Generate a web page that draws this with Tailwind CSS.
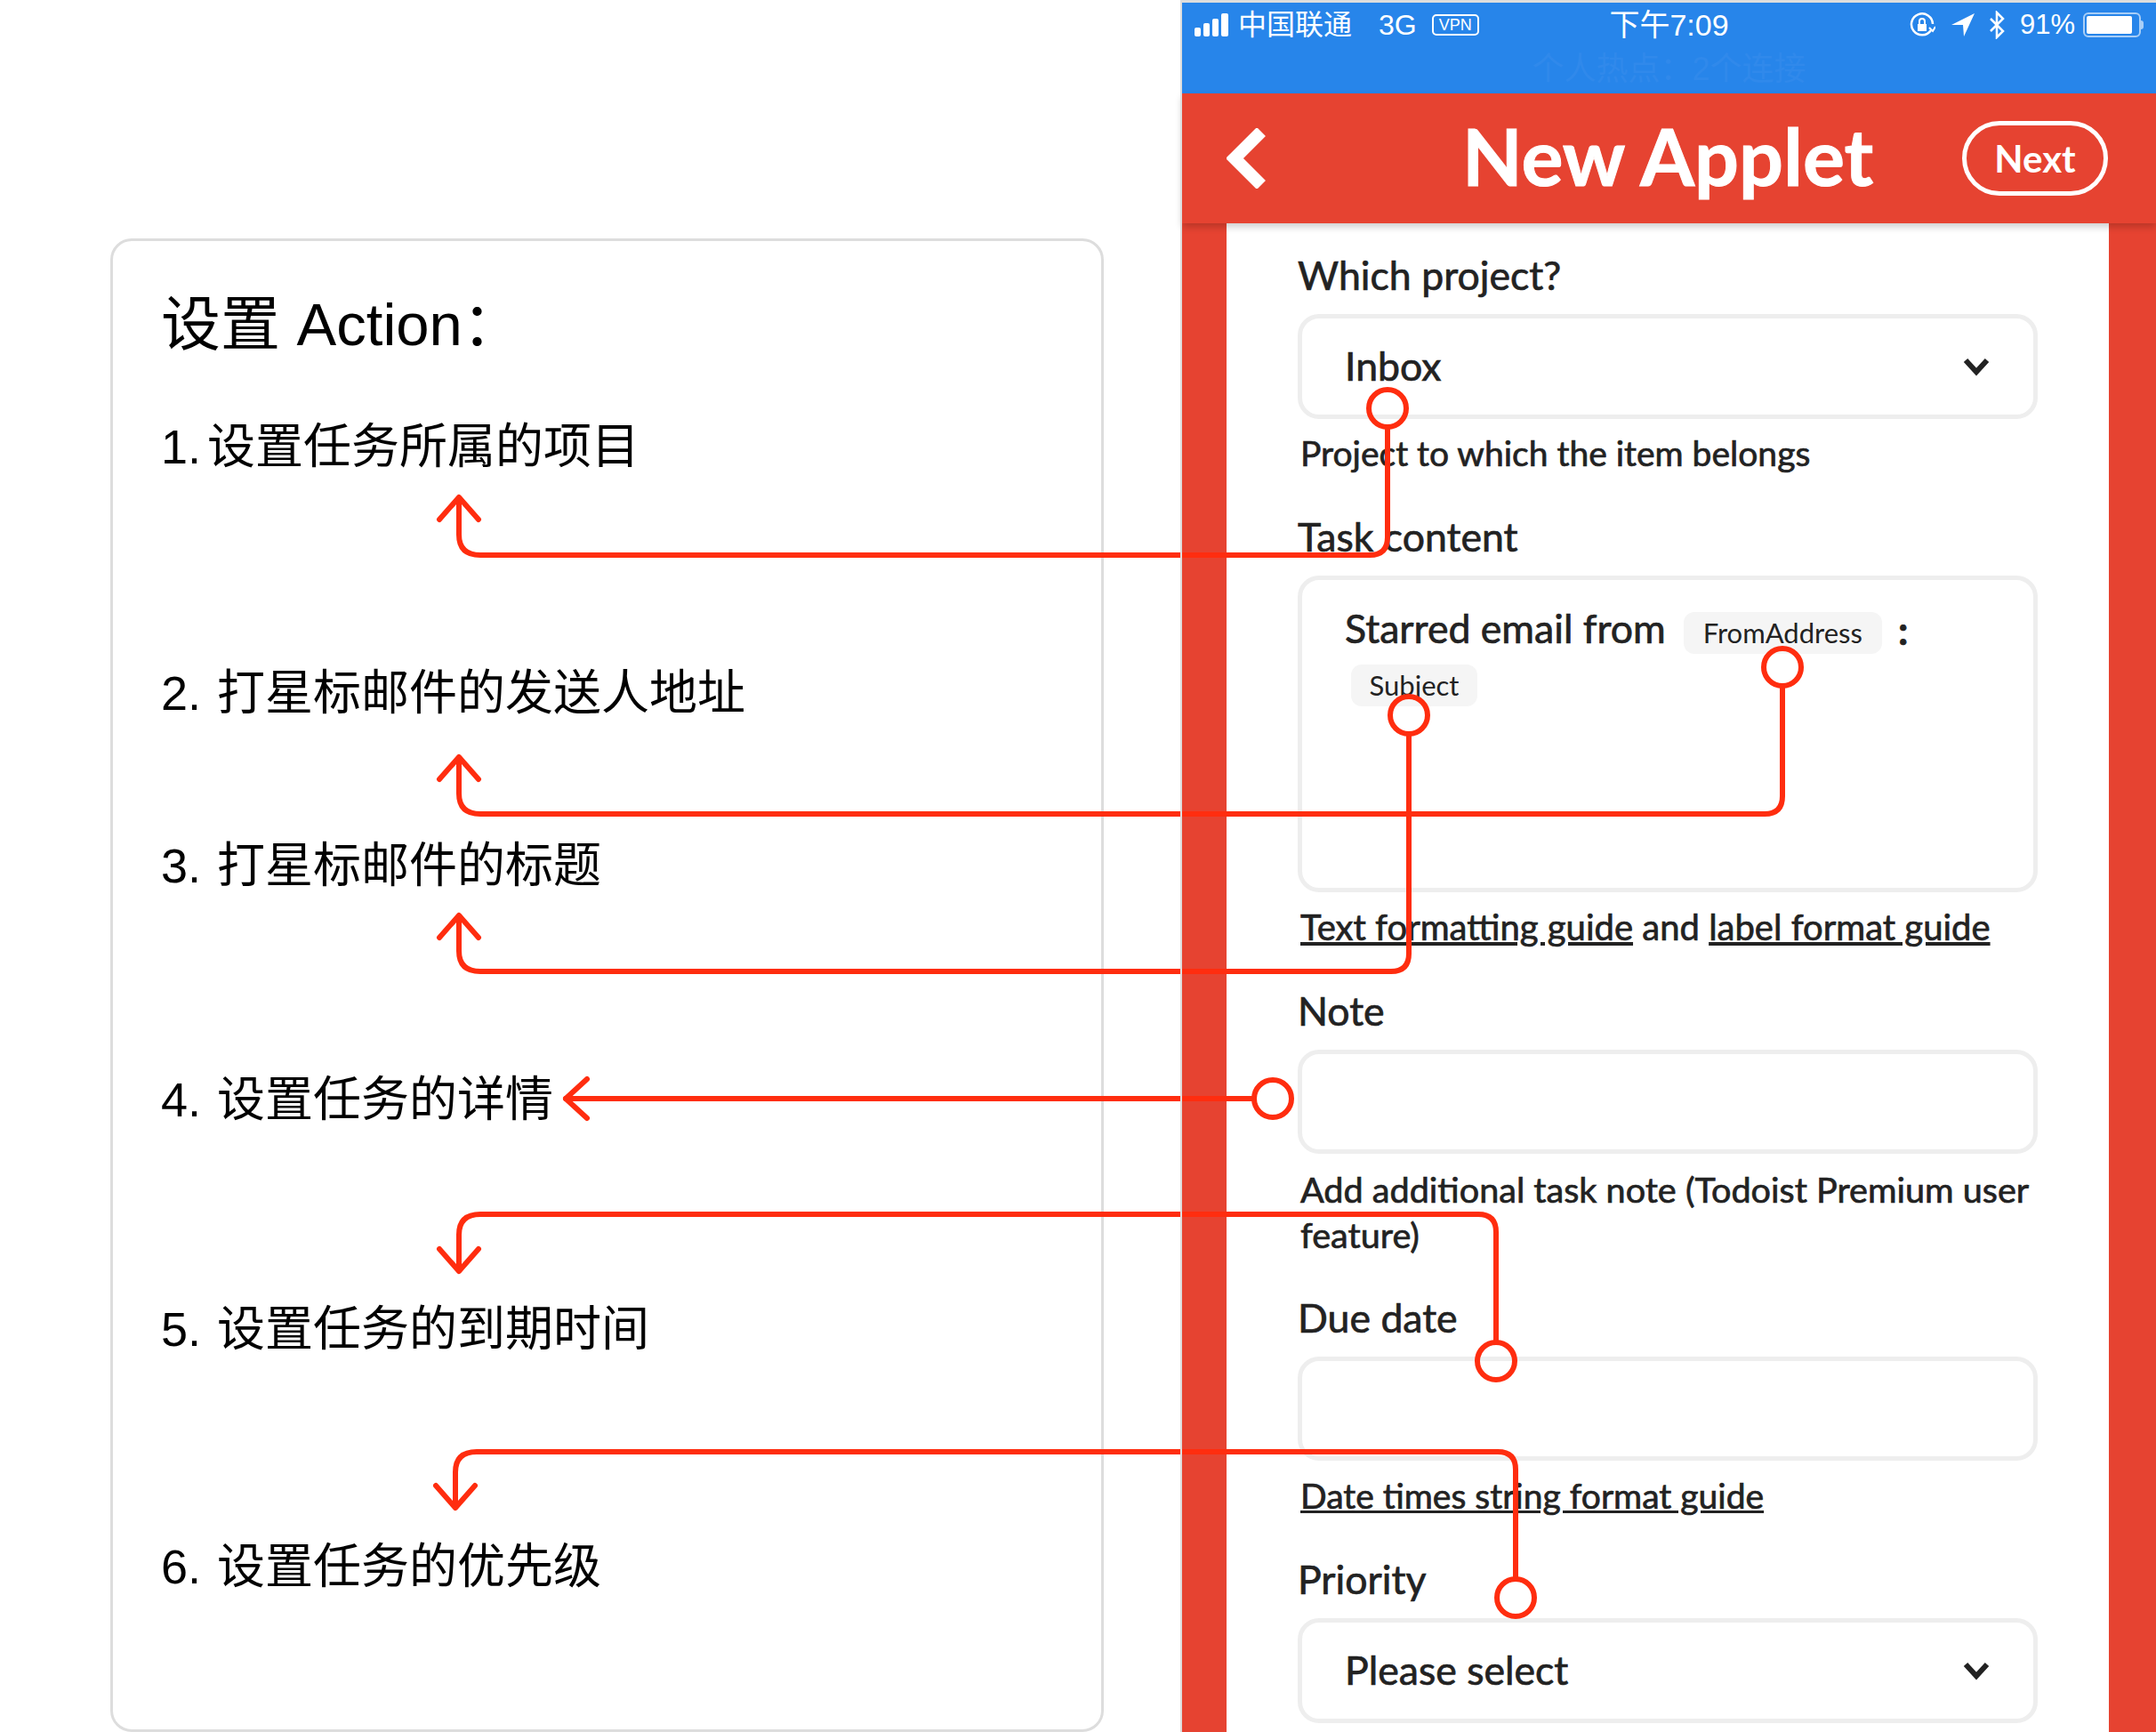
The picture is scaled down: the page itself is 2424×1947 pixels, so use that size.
<!DOCTYPE html>
<html lang="zh-CN">
<head>
    <meta charset="UTF-8">
    <title>设置 Action</title>
    <script src="https://cdn.jsdelivr.net/npm/@tailwindcss/browser@4"></script>
</head>
<body class="bg-white">
    <div class="relative flex w-[2424px] h-[1947px] overflow-hidden bg-white">

        <!-- Left: step list -->
        <div class="w-[1327px] shrink-0 pt-[268px] pl-[124px]">
            <div class="w-[1117px] h-[1679px] border-[3px] border-[#dddddd] rounded-[24px] pl-[54px] pt-[54px] text-black font-['Liberation_Sans','Noto_Sans_CJK_SC',sans-serif]">
                <h1 class="h-[80px] leading-[80px] text-[67px] font-normal">设置 Action：</h1>
                <p class="mt-[67px] h-[60px] leading-[60px] text-[54px]">1.<span class="ml-[7px]">设置任务所属的项目</span></p>
                <p class="mt-[217px] h-[60px] leading-[60px] text-[54px]">2.<span class="ml-[18px]">打星标邮件的发送人地址</span></p>
                <p class="mt-[134px] h-[60px] leading-[60px] text-[54px]">3.<span class="ml-[18px]">打星标邮件的标题</span></p>
                <p class="mt-[203px] h-[60px] leading-[60px] text-[54px]">4.<span class="ml-[18px]">设置任务的详情</span></p>
                <p class="mt-[198px] h-[60px] leading-[60px] text-[54px]">5.<span class="ml-[18px]">设置任务的到期时间</span></p>
                <p class="mt-[207px] h-[60px] leading-[60px] text-[54px]">6.<span class="ml-[18px]">设置任务的优先级</span></p>
            </div>
        </div>

        <!-- Right: phone -->
        <div class="w-[1097px] shrink-0 flex flex-col border-t-[3px] border-[#dddddd] pl-[2px] font-['Lato','Noto_Sans_CJK_SC',sans-serif]">
            <!-- Status bar -->
            <div class="h-[102px] bg-[#2785ea] text-white relative font-['Liberation_Sans','Noto_Sans_CJK_SC',sans-serif]">
                <div class="flex items-center justify-between h-[50px] pl-[14px] pr-[14px]">
                    <div class="flex items-center w-[340px]">
                        <svg width="40" height="26" viewBox="0 0 40 26" fill="#fff"><rect x="0" y="16" width="7" height="10" rx="2"/><rect x="10" y="11" width="7" height="15" rx="2"/><rect x="20" y="6" width="7" height="20" rx="2"/><rect x="30" y="0" width="8" height="26" rx="2"/></svg>
                        <span class="ml-[9px] text-[32px]">中国联通</span>
                        <span class="ml-[30px] text-[32px]">3G</span>
                        <span class="ml-[17px] w-[53px] h-[24px] border-2 border-white rounded-[5px] flex items-center justify-center text-[18px] leading-none">VPN</span>
                    </div>
                    <span class="text-[34px] font-normal">下午7:09</span>
                    <div class="flex items-center w-[340px] justify-end">
                        <svg width="30" height="30" viewBox="0 0 30 30" fill="none" stroke="#fff" stroke-width="2.5"><path d="M25 21 A12 12 0 1 1 27 14"/><path d="M23 18l4 4 3-5" stroke-width="2"/><rect x="10" y="14" width="10" height="8" fill="#fff" stroke="none"/><path d="M12 14v-3a3 3 0 0 1 6 0v3" stroke-width="2"/></svg>
                        <svg class="ml-[17px]" width="28" height="28" viewBox="0 0 28 28" fill="#fff"><path d="M27 1 L1 14 L14 14 L15 27 Z"/></svg>
                        <svg class="ml-[15px]" width="18" height="32" viewBox="0 0 18 32" fill="none" stroke="#fff" stroke-width="2.5"><path d="M2 9 L16 23 L9 30 L9 2 L16 9 L2 23"/></svg>
                        <span class="ml-[17px] text-[31px]">91%</span>
                        <div class="ml-[9px] w-[65px] h-[28px] border-2 border-white/60 rounded-[6px] p-[2px]"><div class="w-[90%] h-full bg-white rounded-[2px]"></div></div>
                        <div class="w-[3px] h-[10px] bg-white/60 rounded-r-sm"></div>
                    </div>
                </div>
                <p class="text-center text-[36px] leading-[50px] text-[#3089eb]">个人热点：2个连接</p>
            </div>

            <!-- Header -->
            <div class="relative z-10 h-[146px] bg-[#e64331] flex items-center text-white shadow-[0_4px_8px_rgba(0,0,0,0.2)]">
                <svg class="ml-[50px] shrink-0" width="46" height="68" viewBox="0 0 46 68" fill="none" stroke="#fff" stroke-width="14"><path d="M39 4 L9 34 L39 64"/></svg>
                <h2 class="ml-[219px] w-[460px] -mt-[7px] text-center text-[88px] leading-none font-bold whitespace-nowrap [-webkit-text-stroke:1px_#fff]">New Applet</h2>
                <div class="ml-[102px] w-[164px] h-[84px] border-[5px] border-white rounded-[42px] flex items-center justify-center text-[42px] font-bold">Next</div>
            </div>

            <!-- Form inside red side bars -->
            <div class="flex-1 bg-[#e64331] pl-[50px] pr-[53px]">
                <div class="h-full bg-white pl-[80px] pr-[80px] pt-[28px] text-[#222222] text-[44.6px] [-webkit-text-stroke:0.7px_#222222]">
                    <label class="block h-[59px] leading-[59px]">Which project?</label>
                    <div class="mt-[15px] h-[118px] border-[5px] border-[#eeeeee] rounded-[24px] pl-[48px] pr-[49px] flex items-center justify-between">
                        <span class="-mt-[2px]">Inbox</span>
                        <svg width="30" height="22" viewBox="0 0 30 22" fill="none" stroke="#222" stroke-width="6"><path d="M3 4 L15 17 L27 4"/></svg>
                    </div>
                    <p class="mt-[14px] pl-[3px] h-[48px] leading-[48px] text-[39px]">Project to which the item belongs</p>

                    <label class="block mt-[40px] h-[59px] leading-[59px]">Task content</label>
                    <div class="mt-[15px] h-[356px] border-[5px] border-[#eeeeee] rounded-[24px] pl-[48px] pt-[30px]">
                        <div class="flex items-center h-[48px]">
                            <span>Starred email from</span>
                            <span class="ml-[20px] h-[47px] mt-[11px] px-[22px] bg-[#f5f5f5] rounded-[12px] text-[31px] leading-[47px] [-webkit-text-stroke:0px]">FromAddress</span>
                            <span class="ml-[18px] font-bold mt-[4px]">:</span>
                        </div>
                        <div class="mt-[17px] ml-[7px] w-[142px] h-[47px] bg-[#f5f5f5] rounded-[12px] text-[31px] leading-[47px] text-center [-webkit-text-stroke:0px]">Subject</div>
                    </div>
                    <p class="mt-[15px] pl-[3px] h-[48px] leading-[48px] text-[40px]"><span class="underline">Text formatting guide</span> and <span class="underline">label format guide</span></p>

                    <label class="block mt-[40px] h-[59px] leading-[59px]">Note</label>
                    <div class="mt-[15px] h-[117px] border-[5px] border-[#eeeeee] rounded-[24px]"></div>
                    <p class="mt-[14px] pl-[3px] leading-[51px] text-[39.6px]">Add additional task note (Todoist Premium user feature)</p>

                    <label class="block mt-[38px] h-[59px] leading-[59px]">Due date</label>
                    <div class="mt-[15px] h-[117px] border-[5px] border-[#eeeeee] rounded-[24px]"></div>
                    <p class="mt-[15px] pl-[3px] h-[48px] leading-[48px] text-[39px]"><span class="underline">Date times string format guide</span></p>

                    <label class="block mt-[40px] h-[59px] leading-[59px]">Priority</label>
                    <div class="mt-[15px] h-[118px] border-[5px] border-[#eeeeee] rounded-[24px] pl-[48px] pr-[49px] flex items-center justify-between">
                        <span class="-mt-[2px]">Please select</span>
                        <svg width="30" height="22" viewBox="0 0 30 22" fill="none" stroke="#222" stroke-width="6"><path d="M3 4 L15 17 L27 4"/></svg>
                    </div>
                </div>
            </div>
        </div>

        <!-- Annotation arrows, laid over both panes -->
        <svg class="absolute inset-0 z-20 pointer-events-none" width="2424" height="1947" viewBox="0 0 2424 1947" fill="none" stroke="#ff2d0f" stroke-width="6" stroke-linejoin="round" stroke-linecap="round">
            <circle cx="1560" cy="459" r="21"/>
            <path d="M1560 480 V604 Q1560 624 1540 624 H540 Q516 624 516 601 V560"/>
            <path d="M494 584 L516 559 L538 584"/>

            <circle cx="2004" cy="750" r="21"/>
            <path d="M2004 771 V895 Q2004 915 1984 915 H540 Q516 915 516 892 V852"/>
            <path d="M494 876 L516 851 L538 876"/>

            <circle cx="1584" cy="804" r="21"/>
            <path d="M1584 825 V1072 Q1584 1092 1564 1092 H540 Q516 1092 516 1069 V1030"/>
            <path d="M494 1054 L516 1029 L538 1054"/>

            <circle cx="1431" cy="1235" r="21"/>
            <path d="M1410 1235 H636"/>
            <path d="M660 1213 L636 1235 L660 1257"/>

            <circle cx="1682" cy="1530" r="21"/>
            <path d="M1682 1509 V1385 Q1682 1365 1662 1365 H540 Q516 1365 516 1388 V1428"/>
            <path d="M494 1404 L516 1429 L538 1404"/>

            <circle cx="1704" cy="1796" r="21"/>
            <path d="M1704 1775 V1652 Q1704 1632 1684 1632 H536 Q512 1632 512 1655 V1694"/>
            <path d="M490 1670 L512 1695 L534 1670"/>
        </svg>
        <!-- phone edge sits above the arrow lines -->
        <div class="absolute z-30 top-0 bottom-0 left-[1327px] w-[2px] bg-[#dddddd]"></div>
    </div>
</body>
</html>
